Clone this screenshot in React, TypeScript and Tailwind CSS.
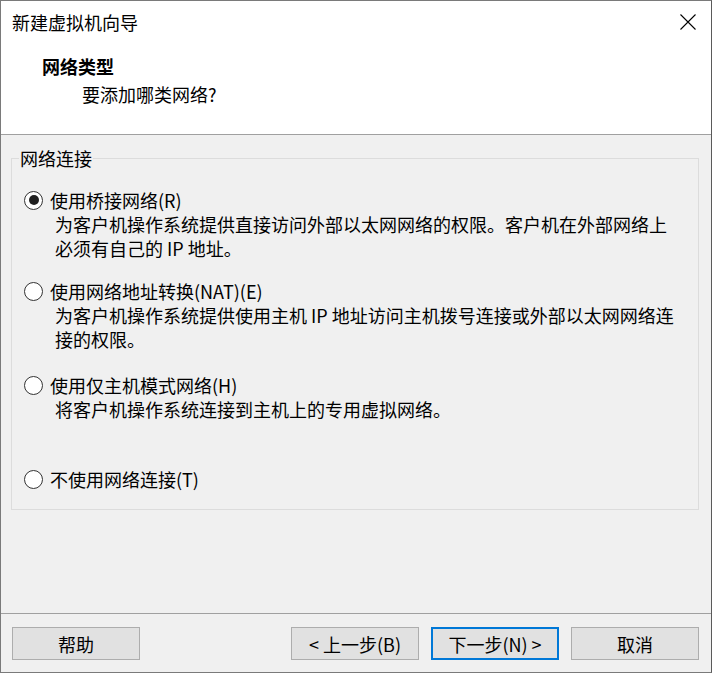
import React from 'react';

const options = [
    {
        label: '使用桥接网络(R)',
        desc: ['为客户机操作系统提供直接访问外部以太网网络的权限。客户机在外部网络上', '必须有自己的 IP 地址。'],
        checked: true,
        gap: 'mt-[18px]',
    },
    {
        label: '使用网络地址转换(NAT)(E)',
        desc: ['为客户机操作系统提供使用主机 IP 地址访问主机拨号连接或外部以太网网络连', '接的权限。'],
        checked: false,
        gap: 'mt-[19px]',
    },
    {
        label: '使用仅主机模式网络(H)',
        desc: ['将客户机操作系统连接到主机上的专用虚拟网络。'],
        checked: false,
        gap: 'mt-[22px]',
    },
    {
        label: '不使用网络连接(T)',
        desc: [],
        checked: false,
        gap: 'mt-[46px]',
    },
];

function Radio({ checked }: { checked: boolean }) {
    return (
        <span className="w-[19px] h-[19px] rounded-full border border-[#333333] bg-white flex items-center justify-center shrink-0">
            {checked && <span className="w-[10px] h-[10px] rounded-full bg-[#1f1f1f]" />}
        </span>
    );
}

function Button({ children, primary }: { children: React.ReactNode; primary?: boolean }) {
    return (
        <button
            className={`w-[128px] h-[33px] bg-[#e1e1e1] text-black text-[18px] leading-none ${primary ? 'border-2 border-[#0078d7]' : 'border border-[#adadad]'}`}
        >
            {children}
        </button>
    );
}

export default function App() {
    return (
        <div
            className="w-[712px] h-[673px] flex flex-col bg-[#f0f0f0] border border-[#7a7a7a] border-r-[#5a5a5a] text-black text-[18px] leading-[24px]"
            style={{ fontFamily: '"Noto Sans CJK SC", "Noto Sans", sans-serif' }}
        >
            {/* Header */}
            <div className="h-[134px] bg-white border-b border-[#a0a0a0] shrink-0">
                <div className="flex items-center justify-between pt-[9px] pl-[11px] pr-[15px]">
                    <span>新建虚拟机向导</span>
                    <svg width="16" height="16" viewBox="0 0 16 16" className="shrink-0">
                        <path d="M0.5 0.5 L15.5 15.5 M15.5 0.5 L0.5 15.5" stroke="#000" strokeWidth="1.1" fill="none" />
                    </svg>
                </div>
                <div className="mt-[20px] pl-[41px] font-bold">网络类型</div>
                <div className="mt-[4px] pl-[81px]">要添加哪类网络?</div>
            </div>

            {/* Body */}
            <div className="flex-1 pt-[11px]">
                <fieldset className="ml-[10px] w-[688px] h-[364px] border border-[#dcdcdc]">
                    <legend className="ml-[7px] px-[1px]">网络连接</legend>
                    <div className="pl-[12px]">
                        {options.map((opt) => (
                            <div key={opt.label} className={opt.gap}>
                                <div className="flex items-center gap-[7px]">
                                    <Radio checked={opt.checked} />
                                    <span>{opt.label}</span>
                                </div>
                                {opt.desc.map((line) => (
                                    <div key={line} className="pl-[31px]">
                                        {line}
                                    </div>
                                ))}
                            </div>
                        ))}
                    </div>
                </fieldset>
            </div>

            {/* Footer */}
            <div className="h-[59px] border-t border-[#a0a0a0] flex items-start pt-[13px] pl-[11px] pr-[12px] shrink-0">
                <Button>帮助</Button>
                <div className="ml-auto flex gap-[12px]">
                    <Button>&lt; 上一步(B)</Button>
                    <Button primary>下一步(N) &gt;</Button>
                    <Button>取消</Button>
                </div>
            </div>
        </div>
    );
}
